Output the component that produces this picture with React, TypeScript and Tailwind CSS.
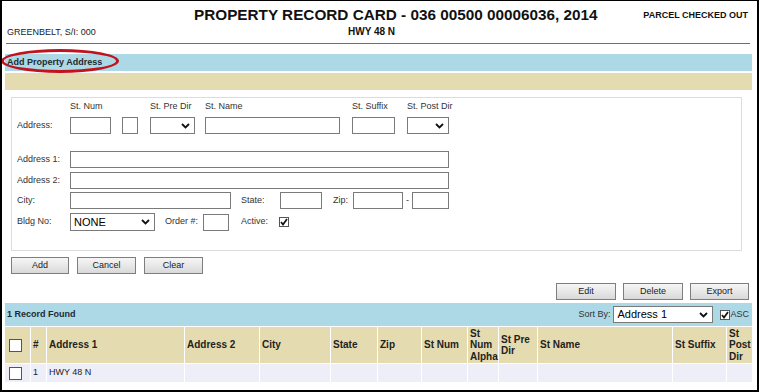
import React from 'react';

const Chevron = () => (
  <svg width="9" height="6" viewBox="0 0 9 6" className="shrink-0">
    <path d="M1 1 L4.5 4.5 L8 1" fill="none" stroke="#111" strokeWidth="1.8" />
  </svg>
);

const Box = ({ w, h = 17 }: { w: number; h?: number }) => (
  <div className="border border-[#7a7a7a] bg-white" style={{ width: w, height: h }} />
);

const Select = ({ w, h = 17, text = "", big = false }: { w: number; h?: number; text?: string; big?: boolean }) => (
  <div
    className="flex items-center justify-between border border-[#7a7a7a] bg-white pl-[3px] pr-[4px]"
    style={{ width: w, height: h }}
  >
    <span className={big ? "text-[11px] text-black" : ""}>{text}</span>
    <Chevron />
  </div>
);

const Check = ({ checked = false, size = 10 }: { checked?: boolean; size?: number }) => (
  <div
    className="flex items-center justify-center border border-[#555] bg-white shrink-0"
    style={{ width: size, height: size }}
  >
    {checked && (
      <svg width="8" height="8" viewBox="0 0 8 8">
        <path d="M1 4 L3 6.5 L7 1" fill="none" stroke="#111" strokeWidth="1.7" />
      </svg>
    )}
  </div>
);

const Button = ({ label, w }: { label: string; w: number }) => (
  <div
    className="flex h-[17px] items-center justify-center border border-[#7e7e7e] bg-gradient-to-b from-[#f6f6f6] to-[#d9d9d9] text-[9px] text-[#222]"
    style={{ width: w }}
  >
    {label}
  </div>
);

const columns = [
  { label: "", w: 26 },
  { label: "#", w: 16 },
  { label: "Address 1", w: 138 },
  { label: "Address 2", w: 75 },
  { label: "City", w: 71 },
  { label: "State", w: 47 },
  { label: "Zip", w: 44 },
  { label: "St Num", w: 46 },
  { label: "St Num Alpha", w: 31 },
  { label: "St Pre Dir", w: 39 },
  { label: "St Name", w: 135 },
  { label: "St Suffix", w: 54 },
  { label: "St Post Dir", w: 25 },
];

export default function App() {
  return (
    <div className="h-[392px] w-[759px] overflow-hidden border-t border-l-2 border-r-2 border-b-2 border-black bg-white font-['Liberation_Sans',Arial,sans-serif] text-[#222]">
      <div className="pl-[3px] pr-[5px]">
        {/* header */}
        <div className="h-[42px]">
          <div className="flex items-start pt-[6px]">
            <span className="ml-[189px] text-[15.3px] font-bold leading-[16px] text-[#111]">
              PROPERTY RECORD CARD - 036 00500 00006036, 2014
            </span>
            <span className="ml-auto mr-[4px] text-[9px] font-bold leading-[16px] text-[#111]">
              PARCEL CHECKED OUT
            </span>
          </div>
          <div className="mt-[3px] flex items-start">
            <span className="w-[343px] pl-[2px] text-[9px] leading-[12px] text-[#222]">GREENBELT, S/I: 000</span>
            <span className="text-[10px] font-bold leading-[12px] text-[#111]">HWY 48 N</span>
          </div>
        </div>
        <div className="ml-px mr-[2px] h-px bg-[#6e6e6e]" />

        {/* add property address bar */}
        <div className="relative mt-[10px] flex h-[17px] items-center bg-[#add8e6] pl-[2px] text-[9px] font-bold text-[#1e2a30]">
          Add Property Address
          <div className="absolute left-[-4px] top-[-5px] h-[24px] w-[118px] rounded-[50%] border-[3px] border-[#c0131d]" />
        </div>
        <div className="mt-[2px] h-[17px] bg-[#e5dbb0]" />

        {/* form panel */}
        <div className="ml-[6px] mr-[10px] mt-[7px] h-[154px] border border-[#dcdcdc] pl-[5px] pt-[2px] text-[9px] text-[#333]">
          <div className="flex h-[13px] items-center">
            <span className="w-[53px]" />
            <span className="w-[80px]">St. Num</span>
            <span className="w-[55px]">St. Pre Dir</span>
            <span className="w-[147px]">St. Name</span>
            <span className="w-[55px]">St. Suffix</span>
            <span>St. Post Dir</span>
          </div>
          <div className="mt-[4px] flex h-[17px] items-center">
            <span className="w-[53px]">Address:</span>
            <Box w={41} />
            <div className="ml-[11px]"><Box w={16} /></div>
            <div className="ml-[12px]"><Select w={45} /></div>
            <div className="ml-[10px]"><Box w={135} /></div>
            <div className="ml-[12px]"><Box w={43} /></div>
            <div className="ml-[12px]"><Select w={42} /></div>
          </div>
          <div className="mt-[17px] flex h-[17px] items-center">
            <span className="w-[53px]">Address 1:</span>
            <Box w={379} />
          </div>
          <div className="mt-[4px] flex h-[17px] items-center">
            <span className="w-[53px]">Address 2:</span>
            <Box w={379} />
          </div>
          <div className="mt-[3px] flex h-[17px] items-center">
            <span className="w-[53px]">City:</span>
            <Box w={161} />
            <span className="ml-[10px] w-[39px]">State:</span>
            <Box w={42} />
            <span className="ml-[11px] w-[20px]">Zip:</span>
            <Box w={50} />
            <span className="w-[9px] text-center">-</span>
            <Box w={37} />
          </div>
          <div className="mt-[4px] flex h-[18px] items-center">
            <span className="w-[53px]">Bldg No:</span>
            <Select w={85} h={18} text="NONE" big />
            <span className="ml-[10px] w-[38px]">Order #:</span>
            <Box w={26} />
            <span className="ml-[12px] w-[38px]">Active:</span>
            <Check checked />
          </div>
        </div>

        {/* add/cancel/clear */}
        <div className="ml-[6px] mt-[6px] flex gap-[8px]">
          <Button label="Add" w={58} />
          <Button label="Cancel" w={59} />
          <Button label="Clear" w={59} />
        </div>

        {/* edit/delete/export */}
        <div className="mr-[3px] mt-[9px] flex justify-end gap-[7px]">
          <Button label="Edit" w={60} />
          <Button label="Delete" w={60} />
          <Button label="Export" w={59} />
        </div>

        {/* record bar */}
        <div className="mt-[3px] flex h-[23px] items-center bg-[#add8e6] pl-[2px] pr-[3px]">
          <span className="text-[9px] font-bold text-[#1e2a30]">1 Record Found</span>
          <span className="ml-auto text-[9px] text-[#333]">Sort By:</span>
          <div className="ml-[3px]">
            <Select w={100} h={17} text="Address 1" big />
          </div>
          <div className="ml-[7px]"><Check checked size={10} /></div>
          <span className="text-[9px] text-[#333]">ASC</span>
        </div>

        {/* table header */}
        <div className="mt-px flex h-[36px] bg-[#e5dbb0]">
          {columns.map((c, i) => (
            <div
              key={i}
              className="flex items-center border-r border-white pl-[2px] text-[10px] font-bold leading-[11.5px] text-[#222] last:border-r-0"
              style={{ width: c.w }}
            >
              {i === 0 ? (
                <div className="ml-[2px]"><Check size={13} /></div>
              ) : (
                c.label
              )}
            </div>
          ))}
        </div>

        {/* data row */}
        <div className="mt-px flex h-[18px] bg-[#eeeef9]">
          {columns.map((c, i) => (
            <div
              key={i}
              className="flex items-center border-r border-white pl-[2px] text-[9px] text-[#222] last:border-r-0"
              style={{ width: c.w }}
            >
              {i === 0 ? <div className="ml-[2px]"><Check size={13} /></div> : i === 1 ? "1" : i === 2 ? "HWY 48 N" : ""}
            </div>
          ))}
        </div>
      </div>
    </div>
  );
}
